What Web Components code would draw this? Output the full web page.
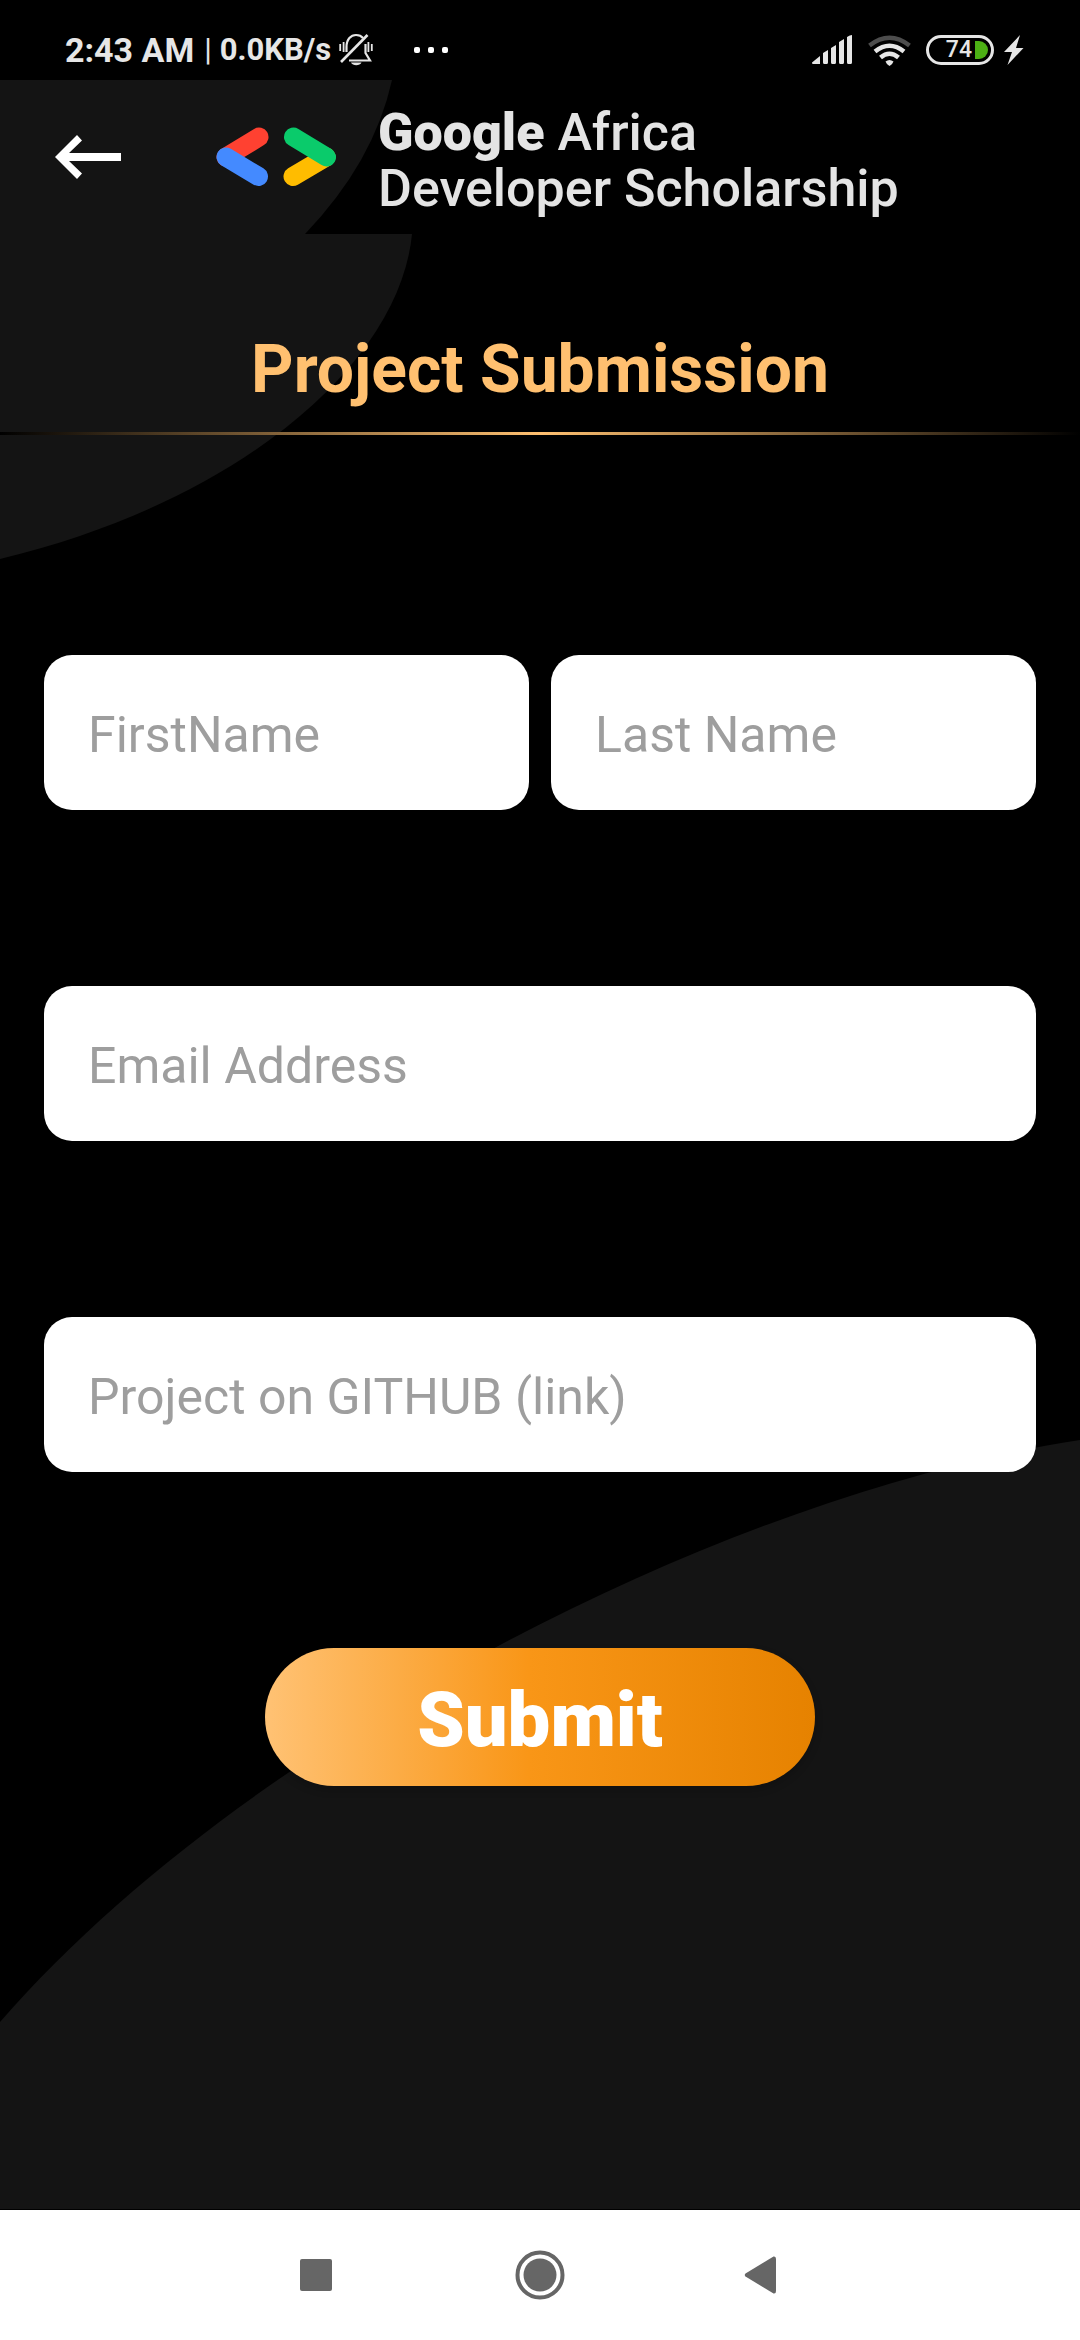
<!DOCTYPE html>
<html lang="en">
<head>
<meta charset="utf-8">
<meta name="viewport" content="width=device-width, initial-scale=1">
<title>Project Submission</title>
<style>
  body { margin: 0; background: #000; font-family: Roboto, "Noto Sans", sans-serif; }
</style>
</head>
<body>
<submission-app></submission-app>

<script>
const define = (name, html, setup) => {
  const template = document.createElement('template');
  template.innerHTML = html;
  customElements.define(name, class extends HTMLElement {
    connectedCallback() {
      if (this.shadowRoot) return;
      const root = this.attachShadow({ mode: 'open' });
      root.append(template.content.cloneNode(true));
      if (setup) setup(this, root);
    }
  });
};

define('status-bar', `
  <style>
    :host { display: flex; align-items: center; justify-content: space-between; box-sizing: border-box;
      height: 80px; padding: 0 56px 0 65px; background: #000; color: #e6e6e6; }
    .side { display: flex; align-items: center; padding-top: 20px; height: 60px; box-sizing: border-box; }
    .time { font: 700 34px/40px Roboto, sans-serif; }
    .net { font: 700 31px/40px Roboto, sans-serif; margin-left: 10px; }
    .net i { font-style: normal; font-weight: 400; margin-right: 8px; }
    svg { display: block; }
    .bell { margin-left: 8px; }
    .dots { margin-left: 40px; }
    .right { gap: 15px; }
    .battery { display: flex; align-items: center; justify-content: flex-end; gap: 3px; box-sizing: border-box;
      width: 68px; height: 30px; border: 3px solid #e6e6e6; border-radius: 15px; padding-right: 3px;
      font: 500 23px/24px Roboto, sans-serif; }
    .battery b { width: 13px; height: 18px; background: #4caf14; border-radius: 0 9px 9px 0; }
    .bolt { margin-left: -5px; }
  </style>
  <div class="side">
    <span class="time">2:43 AM</span>
    <span class="net"><i>|</i>0.0KB/s</span>
    <svg class="bell" width="34" height="34" viewBox="0 0 34 34" fill="none" stroke="#e6e6e6" stroke-width="2">
      <path d="M7.500 19V14C7.500 6 12 2 17 2C20 2 22.500 3 24 5M26.500 11V20L31 27.500H10" stroke-width="2.200"/>
      <path d="M2 29L28.500 2" stroke-width="2.600"/>
      <path d="M1.200 11v7M4.600 9v10M29.400 9v10M32.800 11v7" stroke-width="1.800"/>
      <path d="M12 29.500h10.500c-1.500 3.500-9 3.500-10.500 0z" fill="#e6e6e6" stroke="none"/>
    </svg>
    <svg class="dots" width="36" height="8" viewBox="0 0 36 8" fill="#fff">
      <rect x="1" y="1" width="6" height="6" rx="2"/><rect x="15" y="1" width="6" height="6" rx="2"/><rect x="29" y="1" width="6" height="6" rx="2"/>
    </svg>
  </div>
  <div class="side right">
    <svg width="41" height="30" viewBox="0 0 41 30" fill="#e6e6e6">
      <path d="M0 27.500L8 21v8H1q-1 0-1-1.500zM11 18l5-3v12.500q0 1.500-1.500 1.500h-2q-1.500 0-1.500-1.500zM19 13l5-3v17.500q0 1.500-1.500 1.500h-2q-1.500 0-1.500-1.500zM27 7l5-3v23.500q0 1.500-1.500 1.500h-2q-1.500 0-1.500-1.500zM35 2q3-2 5-2v27.500q0 1.500-1.500 1.500h-2q-1.500 0-1.500-1.500z"/>
    </svg>
    <svg width="43" height="31" viewBox="0 0 43 31" fill="none" stroke="#e6e6e6" stroke-width="4.500">
      <path d="M1.500 10.500Q21.500-5 41.500 10.500" stroke="#4d4d4d"/>
      <path d="M7 16.500Q21.500 5 36 16.500"/>
      <path d="M12.500 22.500Q21.500 15 30.500 22.500"/>
      <path d="M17.500 26.500q4-3 8 0q-1 3-4 4.500q-3-1.500-4-4.500z" fill="#e6e6e6" stroke="none"/>
    </svg>
    <span class="battery">74<b></b></span>
    <svg class="bolt" width="20" height="30" viewBox="0 0 20 30" fill="#e6e6e6"><path d="M16 0L0 17H8L3.500 30L19.500 13H12z"/></svg>
  </div>
`);

define('brand-mark', `
  <style>
    :host { display: flex; align-items: center; gap: 42px; color: #e4e4e4; }
    svg { display: block; flex: none; }
    p { margin: 0; padding-top: 8px; font: 500 52px/56px Roboto, sans-serif; white-space: nowrap; }
    ::slotted(b) { font-weight: 900; }
  </style>
  <svg width="120" height="60" viewBox="0 0 120 60" fill="none" stroke-width="19" stroke-linecap="round" aria-hidden="true">
    <path d="M43 10L10 30" stroke="#ff4131"/>
    <path d="M10 30L42.500 49.500" stroke="#448aff"/>
    <path d="M77 49.500L110 30" stroke="#ffbc00"/>
    <path d="M77.500 10L110.500 30" stroke="#0acb6b"/>
  </svg>
  <p><slot></slot></p>
`);

define('app-header', `
  <style>
    :host { display: block; position: relative; background: #000; }
    .shade { position: absolute; inset: 0; width: 420px; height: 100%; }
    .row { position: relative; display: flex; align-items: center; gap: 94px; height: 154px; padding-left: 55px; }
    button { width: 67px; height: 48px; padding: 0; border: 0; background: none; }
    svg { display: block; }
  </style>
  <svg class="shade" viewBox="0 0 420 154" preserveAspectRatio="none" aria-hidden="true"><path d="M0 0H392Q374 82 305 154H0z" fill="#141414"/></svg>
  <div class="row">
    <button type="button" aria-label="Back">
      <svg width="67" height="48" viewBox="0 0 67 48"><path d="M0 24L22 2L27 7.500L14 20H66V28H14L27 40.500L22 46z" fill="#fff"/></svg>
    </button>
    <slot></slot>
  </div>
`);

define('page-title', `
  <style>
    :host { display: block; padding-top: 97px; }
    h1 { margin: 0; font: 700 66px/78px Roboto, sans-serif; color: #ffc070; text-align: center; }
    hr { height: 3px; margin: 23px 0 0; border: 0; background: linear-gradient(90deg, #000, #ffc070, #000); }
  </style>
  <h1><slot></slot></h1>
  <hr>
`);

define('text-field', `
  <style>
    :host { display: block; flex: 1 1 0; min-width: 0; }
    input { display: block; box-sizing: border-box; width: 100%; height: 155px; margin: 0; padding: 4px 44px 0;
      border: 0; border-radius: 28px; background: #fff; color: #222; font: 400 50px/60px Roboto, sans-serif; }
    input::placeholder { color: #9e9e9e; opacity: 1; }
  </style>
  <input>
`, (host, root) => {
  const input = root.querySelector('input');
  input.type = host.getAttribute('type') || 'text';
  input.placeholder = host.getAttribute('label');
  input.setAttribute('aria-label', host.getAttribute('label'));
});

define('submit-button', `
  <style>
    :host { display: block; align-self: center; }
    button { display: block; width: 550px; height: 138px; padding: 6px 0 0; border: 0; border-radius: 69px; color: #fff;
      background: linear-gradient(90deg, #ffc274, #f99617 48%, #e68200); box-shadow: 0 4px 8px rgba(0,0,0,.2);
      font: 900 76px/90px Roboto, sans-serif; }
  </style>
  <button type="submit"><slot></slot></button>
`);

define('submission-form', `
  <style>
    :host { display: block; padding: 220px 44px 0; }
    form { display: flex; flex-direction: column; gap: 176px; }
    .names { display: flex; gap: 22px; }
  </style>
  <form>
    <div class="names">
      <text-field label="FirstName"></text-field>
      <text-field label="Last Name"></text-field>
    </div>
    <text-field label="Email Address" type="email"></text-field>
    <text-field label="Project on GITHUB (link)" type="url"></text-field>
    <submit-button>Submit</submit-button>
  </form>
`);

define('page-backdrop', `
  <style>
    :host { display: block; position: absolute; inset: 0; z-index: -1; }
    svg { display: block; width: 100%; height: 100%; }
  </style>
  <svg viewBox="0 80 1080 2130" preserveAspectRatio="none" aria-hidden="true" fill="#141414">
    <path d="M0 80H412V234C400 360 245 500 0 559z"/>
    <path d="M0 2022C240 1745 720 1495 1080 1440V2209H0z"/>
  </svg>
`);

define('system-nav', `
  <style>
    :host { display: flex; justify-content: center; height: 130px; background: #fff; }
    button { display: flex; align-items: center; justify-content: center; width: 224px; padding: 0; border: 0; background: none; }
    svg { display: block; fill: #666; }
  </style>
  <button type="button" aria-label="Recent apps"><svg width="32" height="32" viewBox="0 0 32 32"><rect width="32" height="32" rx="2"/></svg></button>
  <button type="button" aria-label="Home"><svg width="50" height="50" viewBox="0 0 50 50"><circle cx="25" cy="25" r="22.500" fill="none" stroke="#666" stroke-width="4"/><circle cx="25" cy="25" r="16.500"/></svg></button>
  <button type="button" aria-label="Back"><svg width="40" height="40" viewBox="0 0 40 40"><path d="M1.500 18.500L29.500 1.500Q32 1 32 4V36Q32 39 29.500 38.500L1.500 21.500Q0 20 1.500 18.500z"/></svg></button>
`);

define('submission-app', `
  <style>
    :host { display: flex; flex-direction: column; min-height: 100vh; }
    main { flex: 1; position: relative; isolation: isolate; }
  </style>
  <status-bar></status-bar>
  <main>
    <page-backdrop></page-backdrop>
    <app-header><brand-mark><b>Google</b> Africa<br>Developer Scholarship</brand-mark></app-header>
    <page-title>Project Submission</page-title>
    <submission-form></submission-form>
  </main>
  <system-nav></system-nav>
`);
</script>
</body>
</html>
